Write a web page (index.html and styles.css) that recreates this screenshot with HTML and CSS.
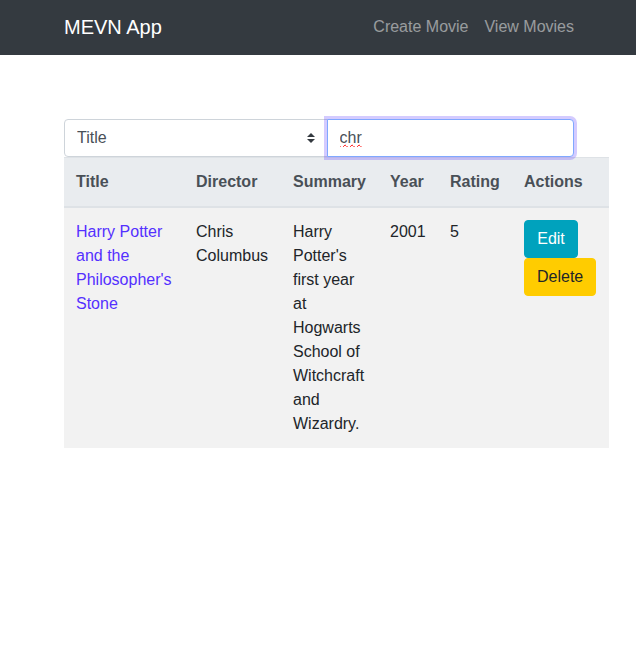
FILE: index.html
```html
<!DOCTYPE html>
<html lang="en">
<head>
<meta charset="utf-8">
<meta name="viewport" content="width=device-width, initial-scale=1">
<title>MEVN App</title>
<link rel="stylesheet" href="styles.css">
</head>
<body>
<header class="navbar">
  <nav class="container navbar-inner">
    <a class="brand" href="#">MEVN App</a>
    <div class="nav-links">
      <a class="nav-link" href="#">Create Movie</a>
      <a class="nav-link" href="#">View Movies</a>
    </div>
  </nav>
</header>
<main class="container content">
  <form class="search">
    <select class="field search-by" aria-label="Search by">
      <option>Title</option>
      <option>Director</option>
    </select>
    <input class="field search-text" type="text" value="chr" aria-label="Search text" spellcheck="false">
  </form>
  <table class="movies">
    <colgroup>
      <col class="col-title">
      <col class="col-text">
      <col class="col-text">
      <col class="col-year">
      <col class="col-rating">
      <col class="col-text">
    </colgroup>
    <thead>
      <tr><th>Title</th><th>Director</th><th>Summary</th><th>Year</th><th>Rating</th><th>Actions</th></tr>
    </thead>
    <tbody>
      <tr>
        <td><a class="movie-link" href="#">Harry Potter and the Philosopher's Stone</a></td>
        <td>Chris Columbus</td>
        <td>Harry Potter's first year at Hogwarts School of Witchcraft and Wizardry.</td>
        <td>2001</td>
        <td>5</td>
        <td>
          <button class="btn btn-edit" type="button">Edit</button>
          <button class="btn btn-delete" type="button">Delete</button>
        </td>
      </tr>
    </tbody>
  </table>
</main>
</body>
</html>
```
FILE: styles.css
```css
*,
*::before,
*::after {
  box-sizing: border-box;
}

body {
  margin: 0;
  background: #fff;
  color: #212529;
  font: 16px/24px "Liberation Sans", Arial, sans-serif;
}

a {
  text-decoration: none;
}

.container {
  width: 100%;
  max-width: 540px;
  margin: 0 auto;
  padding: 0 14px 0 16px;
}

.navbar {
  padding: 7px 0 8px;
  background: #343a40;
}

.navbar-inner {
  display: flex;
  align-items: center;
  justify-content: space-between;
}

.brand {
  color: #fff;
  font-size: 20px;
  line-height: 30px;
}

.nav-links {
  display: flex;
  gap: 16px;
}

.nav-link {
  padding: 8px 0;
  color: rgba(255, 255, 255, 0.5);
}

.content {
  padding-top: 64px;
}

.search {
  display: flex;
}

.field {
  flex: 1 1 0;
  min-width: 0;
  height: 38px;
  margin: 0;
  padding: 6px 12px;
  border: 1px solid #ced4da;
  background-color: #fff;
  color: #495057;
  font: inherit;
  outline: 0;
}

.search-by {
  appearance: none;
  padding-right: 28px;
  border-radius: 4px 0 0 4px;
  background-image: url("data:image/svg+xml,%3csvg xmlns='http://www.w3.org/2000/svg' viewBox='0 0 4 5'%3e%3cpath fill='%23343a40' d='M2 0L0 2h4zm0 5L0 3h4z'/%3e%3c/svg%3e");
  background-repeat: no-repeat;
  background-position: right 12px center;
  background-size: 8px 10px;
}

.search-text {
  z-index: 1;
  margin-left: -1px;
  border-color: #80a8ff;
  border-radius: 0 4px 4px 0;
  box-shadow: 0 0 0 3px rgba(84, 48, 255, 0.25);
  text-decoration: underline;
  text-decoration-style: wavy;
  text-decoration-color: #f00;
  text-decoration-thickness: 1px;
  text-decoration-skip-ink: none;
}

.movies {
  width: 100%;
  min-width: 545px;
  border-collapse: collapse;
}

.col-title {
  width: 120px;
}

.col-text {
  width: 97px;
}

.col-year {
  width: 60px;
}

.col-rating {
  width: 74px;
}

.movies th,
.movies td {
  padding: 12px;
  border-top: 1px solid #dee2e6;
  text-align: left;
  vertical-align: top;
}

.movies thead th {
  border-bottom: 2px solid #dee2e6;
  background: #e9ecef;
  color: #495057;
  vertical-align: bottom;
}

.movies tbody tr {
  background: #f2f2f2;
}

.movie-link {
  color: #5430ff;
}

.btn {
  min-width: 54px;
  padding: 6px 12px;
  border: 1px solid transparent;
  border-radius: 4px;
  font: inherit;
  vertical-align: middle;
}

.btn-edit {
  border-color: #00a2bd;
  background: #00a2bd;
  color: #fff;
}

.btn-delete {
  border-color: #fc0;
  background: #fc0;
  color: #212529;
}
```
